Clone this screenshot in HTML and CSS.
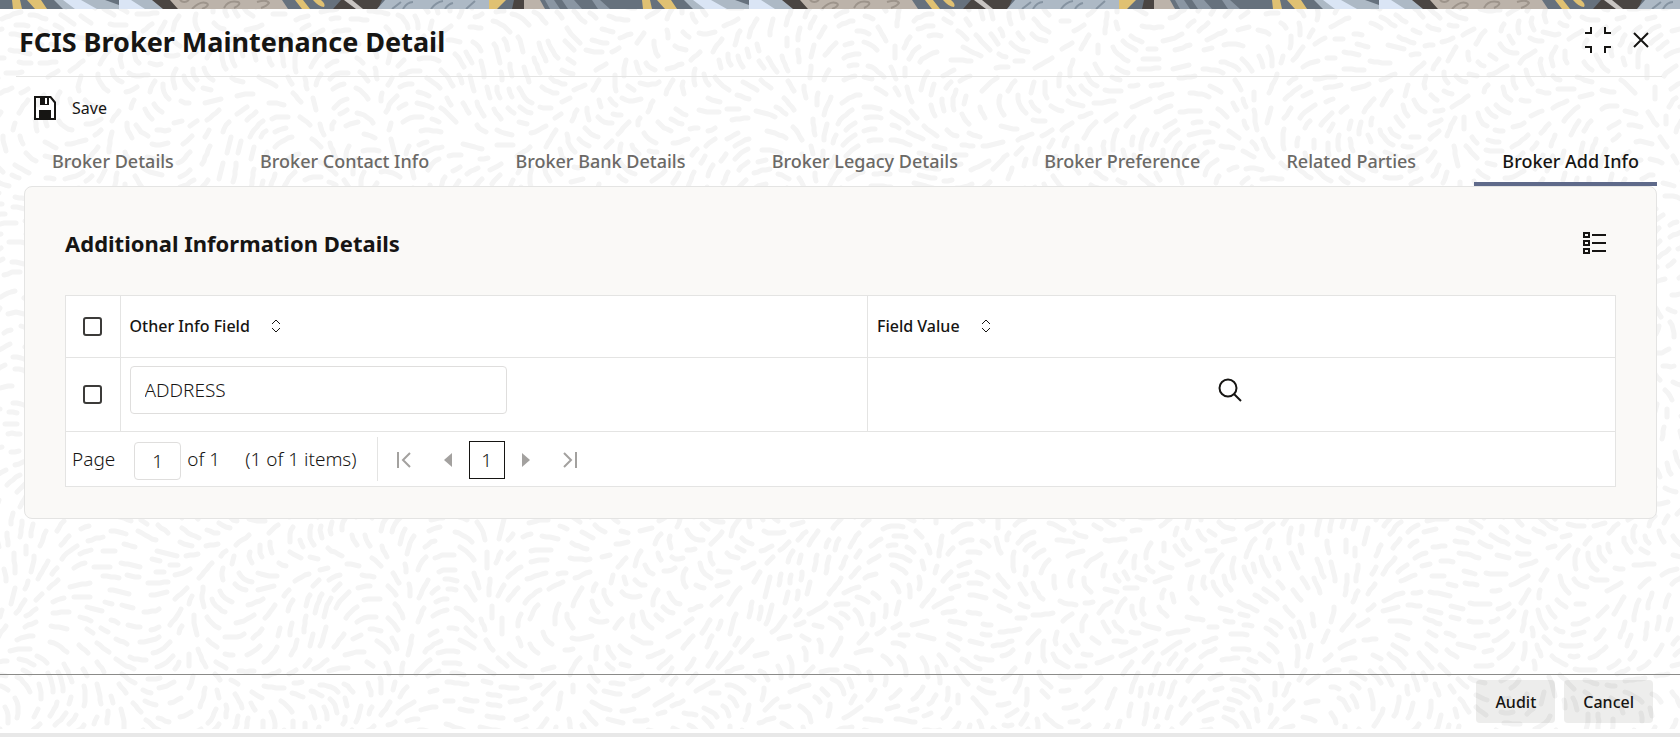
FILE: index.html
```html
<!DOCTYPE html>
<html lang="en">

<head>
    <meta charset="utf-8">
    <meta name="viewport" content="width=device-width, initial-scale=1">
    <title>FCIS Broker Maintenance Detail</title>
    <link rel="stylesheet" href="styles.css">
</head>

<body>
    <svg class="texture" aria-hidden="true"><path id="dashes"></path></svg>

    <svg class="strip" aria-hidden="true">
        <defs>
            <pattern id="ribbon" width="630" height="9" patternUnits="userSpaceOnUse">
                <rect width="630" height="9" fill="#66717d" />
                <path fill="#e0c172" d="M12 0h8l2 9h-9zM27 0h14l6 9H35zM295 0h8l7 9h-8zM313 0h8q5 4 3 7q-5 0-11-7z" />
                <path fill="#adb9c5" d="M54 0h108l10 9H63z" />
                <path fill="#dae5f5" d="M63 0h18l16 9H75zM119 0h12l14 9h-26z" />
                <path fill="#66717d" d="M105 0h14v5z" />
                <path fill="#bcb3aa" d="M165 0h117l6 9H170z" />
                <path fill="#4a4542" d="M152 0h18l8 9h-15zM341 0h41l-4 9h-45z" />
                <path fill="none" stroke="#9d948b" stroke-width="2" d="M180 0q4 4 9 0M192 9q8-8 14-6q5 2-4 6M224 8q4-8 14-6q4 2-4 6M257 2q10-3 12 1q-2 3-8 5" />
                <path fill="#c9c5c2" d="M344 0h8l11 9h-7z" />
                <path fill="#adb9c5" d="M385 0h104v9H377z" />
                <path fill="none" stroke="#8593a1" stroke-width="2" d="M392 9l9-7M403 9q4-7 10-7M431 9q5-7 12-8M445 9q3-5 8-6M466 9l9-8" />
                <path fill="#e0c172" d="M489 0h17l-9 9h-8z" />
                <path fill="#4a4542" d="M514 0h10v9h-12z" />
                <path fill="#bcb3aa" d="M524 0h16l5 9h-21z" />
                <path fill="#8a96a3" d="M545 0h9l6 9h-10zM562 0h12l8 9h-14zM592 0h8l10 9h-12z" />
            </pattern>
        </defs>
        <rect width="100%" height="9" fill="url(#ribbon)" />
    </svg>

    <header class="header">
        <h1>FCIS Broker Maintenance Detail</h1>
        <div class="window-actions">
            <button type="button" class="icon-button" aria-label="Restore">
                <svg width="26" height="26" viewBox="0 0 26 26"><path d="M0 6h7M6 0v7M20 0v7M19 6h7M0 20h7M6 19v7M20 19v7M19 20h7" /></svg>
            </button>
            <button type="button" class="icon-button" aria-label="Close">
                <svg width="16" height="16" viewBox="0 0 16 16"><path d="M1 1l14 14M15 1L1 15" /></svg>
            </button>
        </div>
    </header>

    <div class="toolbar">
        <button type="button" class="save-button">
            <svg width="22" height="24" viewBox="0 0 22 24">
                <path fill="#161513" fill-rule="evenodd" d="M0 0h17l5 6v18H0zM2 2v20h18V7l-4-5z" />
                <path fill="#161513" d="M6 2h9v7H6zM5 14h12v8H5z" />
                <path fill="#fff" d="M11 2h2v6h-2z" />
            </svg>
            Save
        </button>
    </div>

    <main class="content">
        <nav class="tabs">
            <a href="#">Broker Details</a>
            <a href="#">Broker Contact Info</a>
            <a href="#">Broker Bank Details</a>
            <a href="#">Broker Legacy Details</a>
            <a href="#">Broker Preference</a>
            <a href="#">Related Parties</a>
            <a href="#" class="active" aria-current="page">Broker Add Info</a>
        </nav>

        <section class="panel">
            <div class="panel-head">
                <h2>Additional Information Details</h2>
                <button type="button" class="icon-button" aria-label="Form view">
                    <svg width="24" height="24" viewBox="0 0 24 24"><path d="M2 2h5v4H2zM2 10h5v4H2zM2 18h5v4H2zM10 4h14M10 12h14M10 20h14" /></svg>
                </button>
            </div>

            <div class="grid">
                <table>
                    <thead>
                        <tr>
                            <th class="check"><input type="checkbox" aria-label="Select all rows"></th>
                            <th>
                                <button type="button" class="sort">Other Info Field
                                    <svg width="10" height="14" viewBox="0 0 10 14"><path d="M1 5l4-4 4 4M1 9l4 4 4-4" /></svg>
                                </button>
                            </th>
                            <th>
                                <button type="button" class="sort">Field Value
                                    <svg width="10" height="14" viewBox="0 0 10 14"><path d="M1 5l4-4 4 4M1 9l4 4 4-4" /></svg>
                                </button>
                            </th>
                        </tr>
                    </thead>
                    <tbody>
                        <tr>
                            <td class="check"><input type="checkbox" aria-label="Select row"></td>
                            <td><input type="text" class="field" value="ADDRESS" aria-label="Other Info Field"></td>
                            <td class="lookup">
                                <button type="button" class="icon-button" aria-label="Search">
                                    <svg width="24" height="24" viewBox="0 0 24 24"><circle cx="10" cy="10" r="8.500" /><path d="M16 16l7 7" /></svg>
                                </button>
                            </td>
                        </tr>
                    </tbody>
                </table>

                <div class="pager">
                    <label for="page">Page</label>
                    <input type="text" id="page" class="page-input" value="1">
                    <span class="page-total">of 1</span>
                    <span class="page-items">(1 of 1 items)</span>
                    <div class="page-buttons">
                        <button type="button" aria-label="First page">
                            <svg width="14" height="18" viewBox="0 0 14 18"><path d="M1 1v16M13 2L6 9l7 7" /></svg>
                        </button>
                        <button type="button" aria-label="Previous page">
                            <svg width="8" height="14" viewBox="0 0 8 14"><path class="solid" d="M8 0v14L0 7z" /></svg>
                        </button>
                        <button type="button" class="current">1</button>
                        <button type="button" aria-label="Next page">
                            <svg width="8" height="14" viewBox="0 0 8 14"><path class="solid" d="M0 0v14l8-7z" /></svg>
                        </button>
                        <button type="button" aria-label="Last page">
                            <svg width="14" height="18" viewBox="0 0 14 18"><path d="M13 1v16M1 2l7 7-7 7" /></svg>
                        </button>
                    </div>
                </div>
            </div>
        </section>
    </main>

    <footer class="footer">
        <button type="button">Audit</button>
        <button type="button">Cancel</button>
    </footer>

    <script src="script.js"></script>
</body>

</html>
```

FILE: styles.css
```css
* {
    box-sizing: border-box;
}

body {
    margin: 0;
    min-height: 100vh;
    display: flex;
    flex-direction: column;
    position: relative;
    background-color: #fff;
    color: #161513;
    font-family: "Noto Sans", "Open Sans", sans-serif;
    font-size: 16px;
    border-bottom: 4px solid #e8e8e8;
}

button,
input {
    font: inherit;
    color: inherit;
}

button {
    border: none;
    background: none;
    padding: 0;
    cursor: pointer;
}

svg {
    display: block;
    fill: none;
    stroke: #161513;
    stroke-width: 2;
}

.texture {
    position: absolute;
    top: 9px;
    left: 0;
    width: 100%;
    height: calc(100% - 13px);
    z-index: -1;
    stroke: #f4f4f4;
    stroke-width: 5;
    stroke-linecap: round;
    stroke-linejoin: round;
}

.strip {
    width: 100%;
    height: 9px;
    stroke: none;
}

.header {
    display: flex;
    justify-content: space-between;
    align-items: center;
    height: 68px;
    margin: 0 18px 0 16px;
    padding: 0 13px 2px 3px;
    border-bottom: 1px solid #e4e4e3;
}

h1,
h2 {
    margin: 0;
    font-weight: 700;
}

h1 {
    font-size: 27px;
    line-height: 36px;
}

h2 {
    font-size: 22px;
    line-height: 32px;
}

.window-actions {
    display: flex;
    align-items: center;
    gap: 22px;
    padding-bottom: 4px;
}

.toolbar {
    padding: 15px 34px 17px;
}

.save-button {
    display: flex;
    align-items: center;
    gap: 16px;
    height: 32px;
}

.save-button svg {
    stroke: none;
}

.content {
    flex: 1;
    padding: 0 23px 0 24px;
}

.tabs {
    display: flex;
    justify-content: space-between;
}

.tabs a {
    height: 45px;
    padding: 5px 18px 0 28px;
    border-bottom: 4px solid transparent;
    color: #6b6966;
    font-size: 18px;
    line-height: 30px;
    font-weight: 500;
    text-decoration: none;
    white-space: nowrap;
}

.tabs .active {
    color: #161513;
    border-bottom-color: #5f6a8a;
}

.panel {
    padding: 40px;
    padding-bottom: 31px;
    background-color: #faf9f7;
    border: 1px solid #e4e4e3;
    border-radius: 8px;
}

.panel-head {
    display: flex;
    justify-content: space-between;
    align-items: center;
    padding: 0 10px 36px 0;
}

.grid {
    background-color: #fff;
    border: 1px solid #e4e4e3;
}

table {
    width: 100%;
    table-layout: fixed;
    border-collapse: collapse;
}

th,
td {
    padding: 0 9px;
    text-align: left;
    border-bottom: 1px solid #e4e4e3;
    border-left: 1px solid #e4e4e3;
}

th {
    height: 61px;
    font-weight: 500;
}

td {
    height: 74px;
    padding-bottom: 8px;
}

.check {
    width: 54px;
    border-left: none;
    padding: 0 0 0 17px;
}

.check input {
    appearance: none;
    display: block;
    width: 19px;
    height: 19px;
    margin: 0;
    border: 2px solid #3c3b39;
    border-radius: 3px;
    background-color: #fff;
}

.check input:checked {
    background-color: #161513;
}

.sort {
    display: flex;
    align-items: center;
    gap: 21px;
}

.sort svg {
    stroke-width: 1;
}

.field {
    display: block;
    width: 377px;
    max-width: 100%;
    height: 48px;
    padding: 0 14px;
    border: 1px solid #dfdedd;
    border-radius: 4px;
    background-color: #fff;
    font-size: 19px;
    font-weight: 300;
}

.lookup {
    padding-right: 32px;
}

.lookup .icon-button {
    display: block;
    margin: 0 auto;
}

.pager {
    display: flex;
    align-items: center;
    height: 54px;
    padding-left: 6px;
    font-size: 19px;
    font-weight: 300;
}

.page-input {
    width: 47px;
    height: 38px;
    margin: 4px 6px 0 19px;
    padding: 0;
    border: 1px solid #dfdedd;
    border-radius: 4px;
    text-align: center;
}

.page-items {
    margin: 0 20px 0 25px;
}

.page-buttons {
    display: flex;
    align-items: center;
    gap: 17px;
    height: 44px;
    padding: 3px 0 0 19px;
    border-left: 1px solid #e4e4e3;
}

.page-buttons button:first-child {
    margin-right: 16px;
}

.page-buttons button:last-child {
    margin-left: 16px;
}

.page-buttons svg {
    stroke: #a3a19f;
}

.page-buttons .solid {
    fill: #a3a19f;
    stroke: none;
}

.page-buttons .current {
    width: 36px;
    height: 38px;
    border: 1px solid #161513;
}

.footer {
    display: flex;
    justify-content: flex-end;
    gap: 9px;
    padding: 5px 27px 10px;
    border-top: 1px solid #8b8b89;
}

.footer button {
    height: 43px;
    padding: 0 19px;
    border-radius: 4px;
    background-color: rgba(22, 21, 19, 0.08);
    font-weight: 500;
}
```

FILE: script.js
```js
// background texture: short rounded dashes that follow a curling field
var drawDashes = () => {
    var width = window.innerWidth;
    var height = window.innerHeight;
    var cell = 10;
    var taken = {};
    var seed = 7;
    var str = '';

    var random = () => {
        seed = (seed * 16807) % 2147483647;
        return seed / 2147483647;
    }

    var angle = (x, y) => 2.4 * Math.sin(x / 71 + 1.3 * Math.sin(y / 93)) + 2.2 * Math.cos(y / 67 + Math.sin(x / 107));

    var isFree = (x, y) => {
        var cx = Math.floor(x / cell);
        var cy = Math.floor(y / cell);
        for (let i = cx - 1; i <= cx + 1; i++) {
            for (let j = cy - 1; j <= cy + 1; j++) {
                for (const p of taken[i + ',' + j] || []) {
                    if (Math.hypot(p[0] - x, p[1] - y) < 9) return false;
                }
            }
        }
        return true;
    }

    for (let n = 0; n < 90000; n++) {
        let x = random() * (width + 40) - 20;
        let y = random() * (height + 40) - 20;
        const steps = 4 + Math.floor(random() * 3);
        const points = [];
        for (let s = 0; s < steps && isFree(x, y); s++) {
            points.push([x, y]);
            const a = angle(x, y);
            x += 4 * Math.cos(a);
            y += 4 * Math.sin(a);
        }
        if (points.length < 3) continue;
        for (const p of points) {
            const key = Math.floor(p[0] / cell) + ',' + Math.floor(p[1] / cell);
            (taken[key] = taken[key] || []).push(p);
        }
        str += 'M' + points.map(p => Math.round(p[0]) + ' ' + Math.round(p[1])).join('L');
    }
    document.getElementById("dashes").setAttribute("d", str);
}

drawDashes();
window.addEventListener("resize", drawDashes);
```
